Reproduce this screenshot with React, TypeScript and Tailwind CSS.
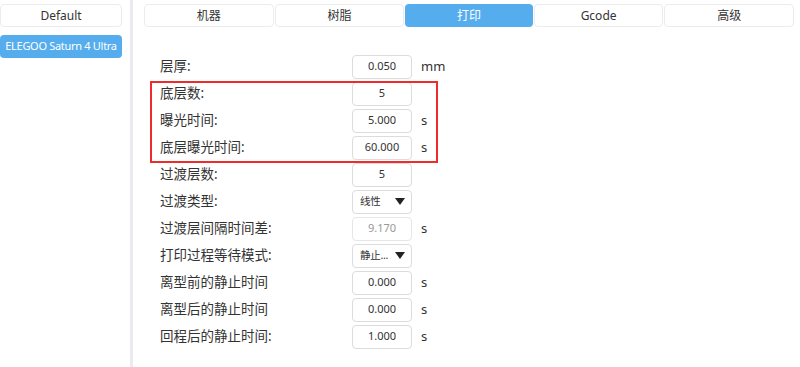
import React from 'react';

type Row = {
  label: string;
  value: string;
  unit?: string;
  kind?: 'input' | 'select' | 'disabled';
};

const rowsTop: Row[] = [{ label: '层厚:', value: '0.050', unit: 'mm' }];

const rowsMarked: Row[] = [
  { label: '底层数:', value: '5' },
  { label: '曝光时间:', value: '5.000', unit: 's' },
  { label: '底层曝光时间:', value: '60.000', unit: 's' },
];

const rowsRest: Row[] = [
  { label: '过渡层数:', value: '5' },
  { label: '过渡类型:', value: '线性', kind: 'select' },
  { label: '过渡层间隔时间差:', value: '9.170', unit: 's', kind: 'disabled' },
  { label: '打印过程等待模式:', value: '静止...', kind: 'select' },
  { label: '离型前的静止时间', value: '0.000', unit: 's' },
  { label: '离型后的静止时间', value: '0.000', unit: 's' },
  { label: '回程后的静止时间:', value: '1.000', unit: 's' },
];

const tabs = ['机器', '树脂', '打印', 'Gcode', '高级'];

function FieldRow({ row }: { row: Row }) {
  return (
    <div className="flex h-[27px] items-center">
      <div className="w-[192px] text-[13.5px] text-[#333]">{row.label}</div>
      {row.kind === 'select' ? (
        <div className="flex h-[24px] w-[60px] items-center justify-between rounded-[4px] border border-[#dcdcdc] bg-white pl-[7px] pr-[6px] text-[10.5px] tracking-[-0.3px] text-[#333]">
          <span>{row.value}</span>
          <svg width="10" height="7" viewBox="0 0 10 7">
            <path d="M0 0 L10 0 L5 7 Z" fill="#222" />
          </svg>
        </div>
      ) : (
        <div
          className={
            'flex h-[24px] w-[60px] items-center justify-center rounded-[4px] border bg-white text-[11px] ' +
            (row.kind === 'disabled' ? 'border-[#e6e6e6] text-[#999]' : 'border-[#dcdcdc] text-[#333]')
          }
        >
          {row.value}
        </div>
      )}
      {row.unit && <div className="ml-[9px] text-[13px] text-[#333]">{row.unit}</div>}
    </div>
  );
}

export default function App() {
  return (
    <div
      className="flex h-[367px] w-[800px] overflow-hidden bg-white"
      style={{ fontFamily: '"Noto Sans", "Noto Sans CJK SC", sans-serif' }}
    >
      {/* left preset list */}
      <div className="flex w-[130px] flex-col gap-[8px] pt-[4px]">
        <div className="flex h-[23px] w-[122px] items-center justify-center rounded-[4px] border border-[#ececec] bg-white text-[12px] text-[#333]">
          Default
        </div>
        <div className="flex h-[23px] w-[122px] items-center justify-center whitespace-nowrap rounded-[4px] bg-[#56adee] text-[11px] tracking-[-0.3px] text-white">
          ELEGOO Saturn 4 Ultra
        </div>
      </div>
      <div className="w-[3px] bg-[#ebebef]" />

      {/* main */}
      <div className="flex-1 pl-[11px] pt-[4px]">
        <div className="flex w-[650px] gap-[1px]">
          {tabs.map((t) => (
            <div
              key={t}
              className={
                'flex h-[23px] flex-1 items-center justify-center rounded-[4px] text-[12px] ' +
                (t === '打印'
                  ? 'bg-[#56adee] text-white'
                  : 'border border-[#ececec] bg-white text-[#333]')
              }
            >
              {t}
            </div>
          ))}
        </div>

        <div className="mt-[26px] pl-[16px]">
          {rowsTop.map((r) => (
            <FieldRow key={r.label} row={r} />
          ))}
          <div className="relative">
            <div className="pointer-events-none absolute -left-[10px] top-[1px] h-[82px] w-[288px] border-2 border-[#ee2c2c]" />
            {rowsMarked.map((r) => (
              <FieldRow key={r.label} row={r} />
            ))}
          </div>
          {rowsRest.map((r) => (
            <FieldRow key={r.label} row={r} />
          ))}
        </div>
      </div>
    </div>
  );
}
